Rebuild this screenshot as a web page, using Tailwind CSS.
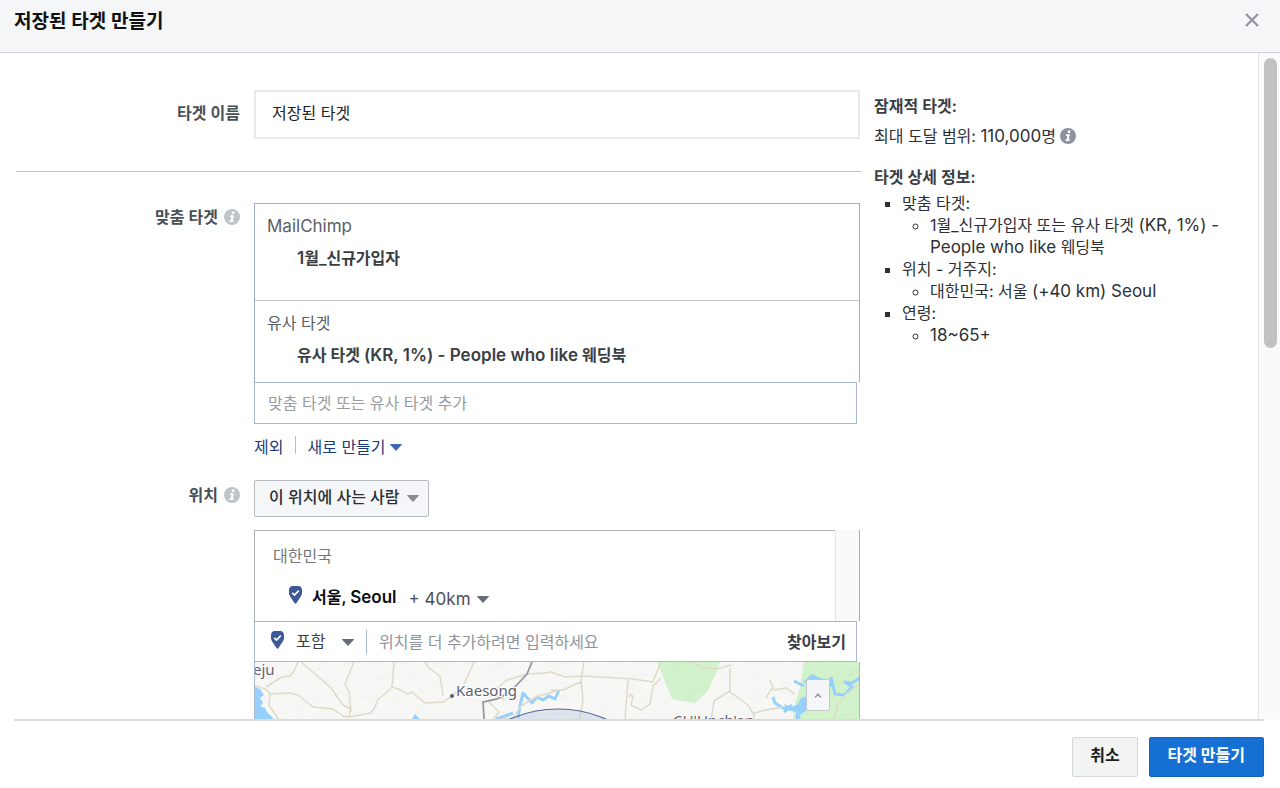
<!DOCTYPE html>
<html lang="ko">
<head>
<meta charset="utf-8">
<meta name="viewport" content="width=device-width, initial-scale=1">
<title>저장된 타겟 만들기</title>
<script src="https://cdn.jsdelivr.net/npm/@tailwindcss/browser@4"></script>
</head>
<body class="flex h-screen flex-col overflow-hidden bg-white font-[Inter,'Noto_Sans_CJK_KR',sans-serif] text-base leading-[22px] text-[#2e3035]">
<svg class="hidden" aria-hidden="true">
  <symbol id="info" viewBox="0 0 16 16">
    <circle cx="8" cy="8" r="8" fill="currentColor"/>
    <path d="M8.1 2.6h2.5l-.5 2.3H7.6zM6.2 6.2h3.7l-1.1 5h1l-.3 1.7H5.4l.3-1.7h.9l.7-3.3H5.9z" fill="#fff"/>
  </symbol>
  <symbol id="caret" viewBox="0 0 12 7"><path d="M0 .5Q0 0 .8 0h10.4q.8 0 .8.5L6.5 6.6q-.5.5-1 0z" fill="currentColor"/></symbol>
  <symbol id="pin" viewBox="0 0 13 18">
    <path d="M3 0h7Q13 .5 13 4.500V7C13 10 9.500 13.500 7.500 17Q6.500 18.500 5.500 17C3.500 13.500 0 10 0 7V4.500Q0 .5 3 0z" fill="#3b5998"/>
    <path d="M3.200 6.800l2.300 2.200 4.300-4.400" fill="none" stroke="#fff" stroke-width="1.700"/>
  </symbol>
</svg>

<header class="flex h-[53px] shrink-0 items-start justify-between border-b border-[#cfd1d5] bg-[#f5f6f7] pt-2 pr-5 pl-3.5">
  <h1 class="text-[19px] leading-[28px] font-semibold text-[#111]">저장된 타겟 만들기</h1>
  <button type="button" aria-label="닫기" class="mt-1 text-[#9197a3]">
    <svg class="size-4" viewBox="0 0 16 16" fill="none" stroke="currentColor" stroke-width="2.400"><path d="M2 2l12 12M14 2L2 14"/></svg>
  </button>
</header>

<main class="flex min-h-0 flex-1 overflow-hidden">
  <form id="audience" class="min-w-0 flex-1 pt-[37px] pl-3.5">
    <div class="flex gap-3.5">
      <label for="name" class="w-[226px] shrink-0 pt-3 text-right font-semibold text-[#4b4f56]">타겟 이름</label>
      <input id="name" type="text" value="저장된 타겟" class="h-[49px] min-w-0 flex-1 border-2 border-[#e9eaeb] px-4 pb-1.5 text-[#1d2129]">
    </div>
    <hr class="mt-8 -mr-0.5 ml-0.5 border-[#c4c4c4]">

    <div class="mt-[31px] flex gap-3.5">
      <div class="flex h-7 w-[226px] shrink-0 items-center justify-end gap-1.5">
        <label for="custom" class="font-semibold text-[#4b4f56]">맞춤 타겟</label>
        <svg class="size-4 text-[#bfc3ca]" role="img" aria-label="정보"><use href="#info"/></svg>
      </div>
      <div class="min-w-0 flex-1">
        <div class="border border-b-0 border-[#9fadcb] text-[#5a5e65]">
          <section class="h-[97px] border-b border-[#c8c8c8] px-3 pt-[11px]">
            <p class="text-[17px]">MailChimp</p>
            <p class="mt-2.5 pl-[30px] font-semibold text-[#3b3e44]"><span class="text-[17px]">1</span>월_신규가입자</p>
          </section>
          <section class="h-[81px] px-3 pt-[11px]">
            <p>유사 타겟</p>
            <p class="mt-2.5 pl-[30px] font-semibold text-[#3b3e44]">유사 타겟 <span class="text-[17px]">(KR, 1%) - People who like</span> 웨딩북</p>
          </section>
        </div>
        <div class="pr-[3px]">
          <input id="custom" type="text" placeholder="맞춤 타겟 또는 유사 타겟 추가" class="block h-[42px] w-full border border-[#a9b8d2] px-[13px] placeholder:text-[#999ca1]">
        </div>
        <div class="mt-3 flex h-[22px] items-center text-[#1d3b78]">
          <a href="#" class="pr-3">제외</a>
          <span class="mb-1 h-[18px] w-px bg-[#b4bdd2]"></span>
          <button type="button" class="flex items-center gap-1 pl-[11px]">새로 만들기<svg class="h-[7px] w-3 text-[#4267b2]"><use href="#caret"/></svg></button>
        </div>
      </div>
    </div>

    <div class="mt-[22px] flex gap-3.5">
      <div class="flex h-[30px] w-[226px] shrink-0 items-center justify-end gap-1.5">
        <label for="who" class="font-semibold text-[#4b4f56]">위치</label>
        <svg class="size-4 text-[#bfc3ca]" role="img" aria-label="정보"><use href="#info"/></svg>
      </div>
      <div class="min-w-0 flex-1">
        <div class="relative h-[37px] w-[175px]">
          <select id="who" class="h-full w-full appearance-none rounded-[2px] border border-[#b8bbc0] bg-[#f5f6f7] pr-7 pb-1 pl-3.5 font-medium text-[#2b2e34]"><option>이 위치에 사는 사람</option></select>
          <svg class="pointer-events-none absolute top-[15px] right-[10px] h-[7px] w-3 text-[#888b90]"><use href="#caret"/></svg>
        </div>

        <div class="mt-[13px] flex h-[91px]">
          <div class="flex-1 border-t border-l border-[#adb0b6] pt-3.5 pl-[18px]">
            <p class="text-[#74777d]">대한민국</p>
            <div class="mt-[17px] flex items-center pl-4">
              <svg class="mb-1 h-[18px] w-[13px]"><use href="#pin"/></svg>
              <strong class="ml-2.5 font-semibold text-[#0d0f14]">서울, <span class="text-[17px]">Seoul</span></strong>
              <div class="relative mt-1 ml-3">
                <select aria-label="반경" class="appearance-none pr-[18px] text-[17px] text-[#4b4f56]"><option>+ 40km</option></select>
                <svg class="pointer-events-none absolute top-2 right-0 h-[7px] w-3 text-[#686c76]"><use href="#caret"/></svg>
              </div>
            </div>
          </div>
          <div class="w-[25px] border-r border-l border-l-[#e4e4e4] border-r-[#a9acb2] bg-[#fafafa]"></div>
        </div>
        <div class="mr-[3px] flex h-[41px] items-center border border-[#a9b8d2] pr-2.5 pl-4">
          <svg class="mb-1 h-[18px] w-[13px]"><use href="#pin"/></svg>
          <div class="relative ml-3 w-[58px]">
            <select aria-label="포함 여부" class="w-full appearance-none pb-0.5 text-[#3b3e44]"><option>포함</option></select>
            <svg class="pointer-events-none absolute top-[9px] right-0 h-[7px] w-3 text-[#686c76]"><use href="#caret"/></svg>
          </div>
          <span class="ml-3 h-6 w-px bg-[#a9b8d2]"></span>
          <input type="text" aria-label="위치 추가" placeholder="위치를 더 추가하려면 입력하세요" class="ml-3 min-w-0 flex-1 placeholder:text-[#90949c]">
          <button type="button" class="font-semibold text-[#3b3e44]">찾아보기</button>
        </div>

        <div class="relative h-[120px] overflow-hidden border-r border-l border-[#a9b8d2]">
          <svg class="block h-full w-full" viewBox="0 0 604 120" preserveAspectRatio="xMinYMin slice" role="img" aria-label="지도">
            <defs>
              <filter id="relief" x="0" y="0" width="100%" height="100%">
                <feTurbulence type="fractalNoise" baseFrequency=".06 .09" numOctaves="3" seed="8"/>
                <feDiffuseLighting surfaceScale="1.800" lighting-color="#fff"><feDistantLight azimuth="225" elevation="62"/></feDiffuseLighting>
                <feColorMatrix type="saturate" values="0"/>
              </filter>
            </defs>
            <rect width="604" height="120" fill="#f8f8f6"/>
            <path d="M402 0L408 15L417 37L440 41L452 30L461 12L465 0zM549 0H604V120H542L538 50L545 25z" fill="#cdf2c5"/>
            <rect width="604" height="120" filter="url(#relief)" opacity=".12"/>
            <g fill="#97d0fd">
              <path d="M0 25l5 2 4 6-4 3 3 5-3 3 5 2 2 4 6 6 2 6-3 8H0zM157 57l3-5 5 5v63h-9z"/>
              <path d="M548 20l9-8 8 4 11 2 2 6-8 3-9 1-2 7-6 3-1 10-7 5 1 9-6 1 1-13-9-2-3-6 8 3 6-3 3-6 8-3 3-6-6-6z"/>
            </g>
            <g fill="none" stroke="#97d0fd" stroke-width="3" stroke-linejoin="round">
              <path d="M241 57l9-3 8-3M263 56l2-12 3-13 9 10 5-6 6 3 6-4 6 3 4-9"/>
              <path d="M518 35l2 6 8 5 8 1M539 19l10 5M529 50l8-7M576 15l4 17 9 1 8-8-7-5 7 1 8-5"/>
            </g>
            <g fill="none" stroke="#dfdac8" stroke-width="1.500" stroke-linejoin="round">
              <path d="M0 24l10 3 6 5 18-1 9 2 15 12 20 2 10 7 6 1 22-4 4-6 3-8 6-4 8-8 9 3 6 4 5-2 13 11 19-1 12-10 12 2 30 2 6 4"/>
              <path d="M11 25l16-10 8-1 4-5 4-9M46 0l20 17 10 9 12 17 8 4-2 7M99 0l-9 22 4 8 2 20M139 0l-2 25M170 0l4 6 11 8 3 20M219 0l-10 22M15 31l-1 12 10 15M234 40l10 10-6 8 20-2 8-12 15-9 20-6M240 28l12-10 20-6 18-1 6-1 14 5 17-1 51 3 20 3 7-18M296 28l12 0 18-8M329 0l-3 18 2 20-4 22M373 18l-3 40-3 8M374 35l2-3 2 3-2 8 10 5 9-6 3-18 8-8"/>
              <path d="M436 0l12 6 14 1 14-4M475 6v24l18 13 6 10-2 14M475 29l-16 10-3 20M515 18l4 10 12-2 9 6M517 26l-6 10M499 51l12-3 17-3M604 22l-12 9-10 13-4 18"/>
            </g>
            <path d="M277 0l-5 12-15 16M230 72L228 40l14-3 12-6" fill="none" stroke="#9796a2" stroke-width="1.800"/>
            <circle cx="303" cy="165" r="118" fill="#9fb3d3" fill-opacity=".28" stroke="#53699c" stroke-width="1.200"/>
            <circle cx="197" cy="34" r="2" fill="#5e5a70"/>
            <g fill="#625e70" stroke="#fff" stroke-width="2" paint-order="stroke" class="font-['Noto_Sans',sans-serif] text-[15px]">
              <text x="-2" y="13">eju</text>
              <text x="201" y="34">Kaesong</text>
              <text x="418" y="64">CH'Unch'on</text>
            </g>
          </svg>
          <button type="button" aria-label="지도 접기" class="absolute top-[17px] right-[29px] flex h-8 w-6 items-center justify-center rounded-[2px] border border-[#c4c7cd] bg-[#f5f6f8] text-[#999]">
            <svg class="h-[5px] w-2" viewBox="0 0 8 5" fill="none" stroke="currentColor" stroke-width="1.500"><path d="M1 4.500L4 1.200 7 4.500"/></svg>
          </button>
        </div>
      </div>
    </div>
  </form>

  <aside class="w-[398px] shrink-0 pt-[42px] pr-8 pl-3.5">
    <h2 class="font-semibold text-[#3b3e44]">잠재적 타겟:</h2>
    <p class="mt-2 flex items-center gap-1"><span>최대 도달 범위: <span class="text-[17px]">110,000</span>명</span><svg class="size-4 text-[#8e949e]" role="img" aria-label="정보"><use href="#info"/></svg></p>
    <h2 class="mt-[19px] font-semibold text-[#3b3e44]">타겟 상세 정보:</h2>
    <ul class="mt-1 list-[square] pl-7">
      <li>맞춤 타겟:
        <ul class="list-[circle] pl-7"><li>1월_신규가입자 또는 유사 타겟 <span class="text-[17px] leading-[20px]">(KR, 1%) - People who like</span> 웨딩북</li></ul>
      </li>
      <li>위치 - 거주지:
        <ul class="list-[circle] pl-7"><li>대한민국: 서울 <span class="text-[17px] leading-[20px]">(+40 km) Seoul</span></li></ul>
      </li>
      <li>연령:
        <ul class="list-[circle] pl-7"><li><span class="text-[17px] leading-[20px]">18~65+</span></li></ul>
      </li>
    </ul>
  </aside>

  <div class="w-[22px] shrink-0 border-l border-[#e6e6e6] bg-[#fafafa] pt-[5px] pl-[5px]" aria-hidden="true">
    <div class="h-[290px] w-[13px] rounded-full bg-[#c1c1c1]"></div>
  </div>
</main>

<footer class="mr-4 ml-3.5 flex h-[69px] shrink-0 items-start justify-end gap-[11px] border-t-2 border-[#dcdcde] pt-4">
  <button type="button" class="h-10 rounded-[2px] border border-[#d5d8da] bg-[#f2f4f4] px-[17px] pb-1 font-semibold text-[#1c1e21]">취소</button>
  <button type="submit" form="audience" class="h-10 rounded-[2px] border border-[#1264c4] bg-[#166fd3] px-[18px] pb-1 font-bold text-white">타겟 만들기</button>
</footer>
</body>
</html>
